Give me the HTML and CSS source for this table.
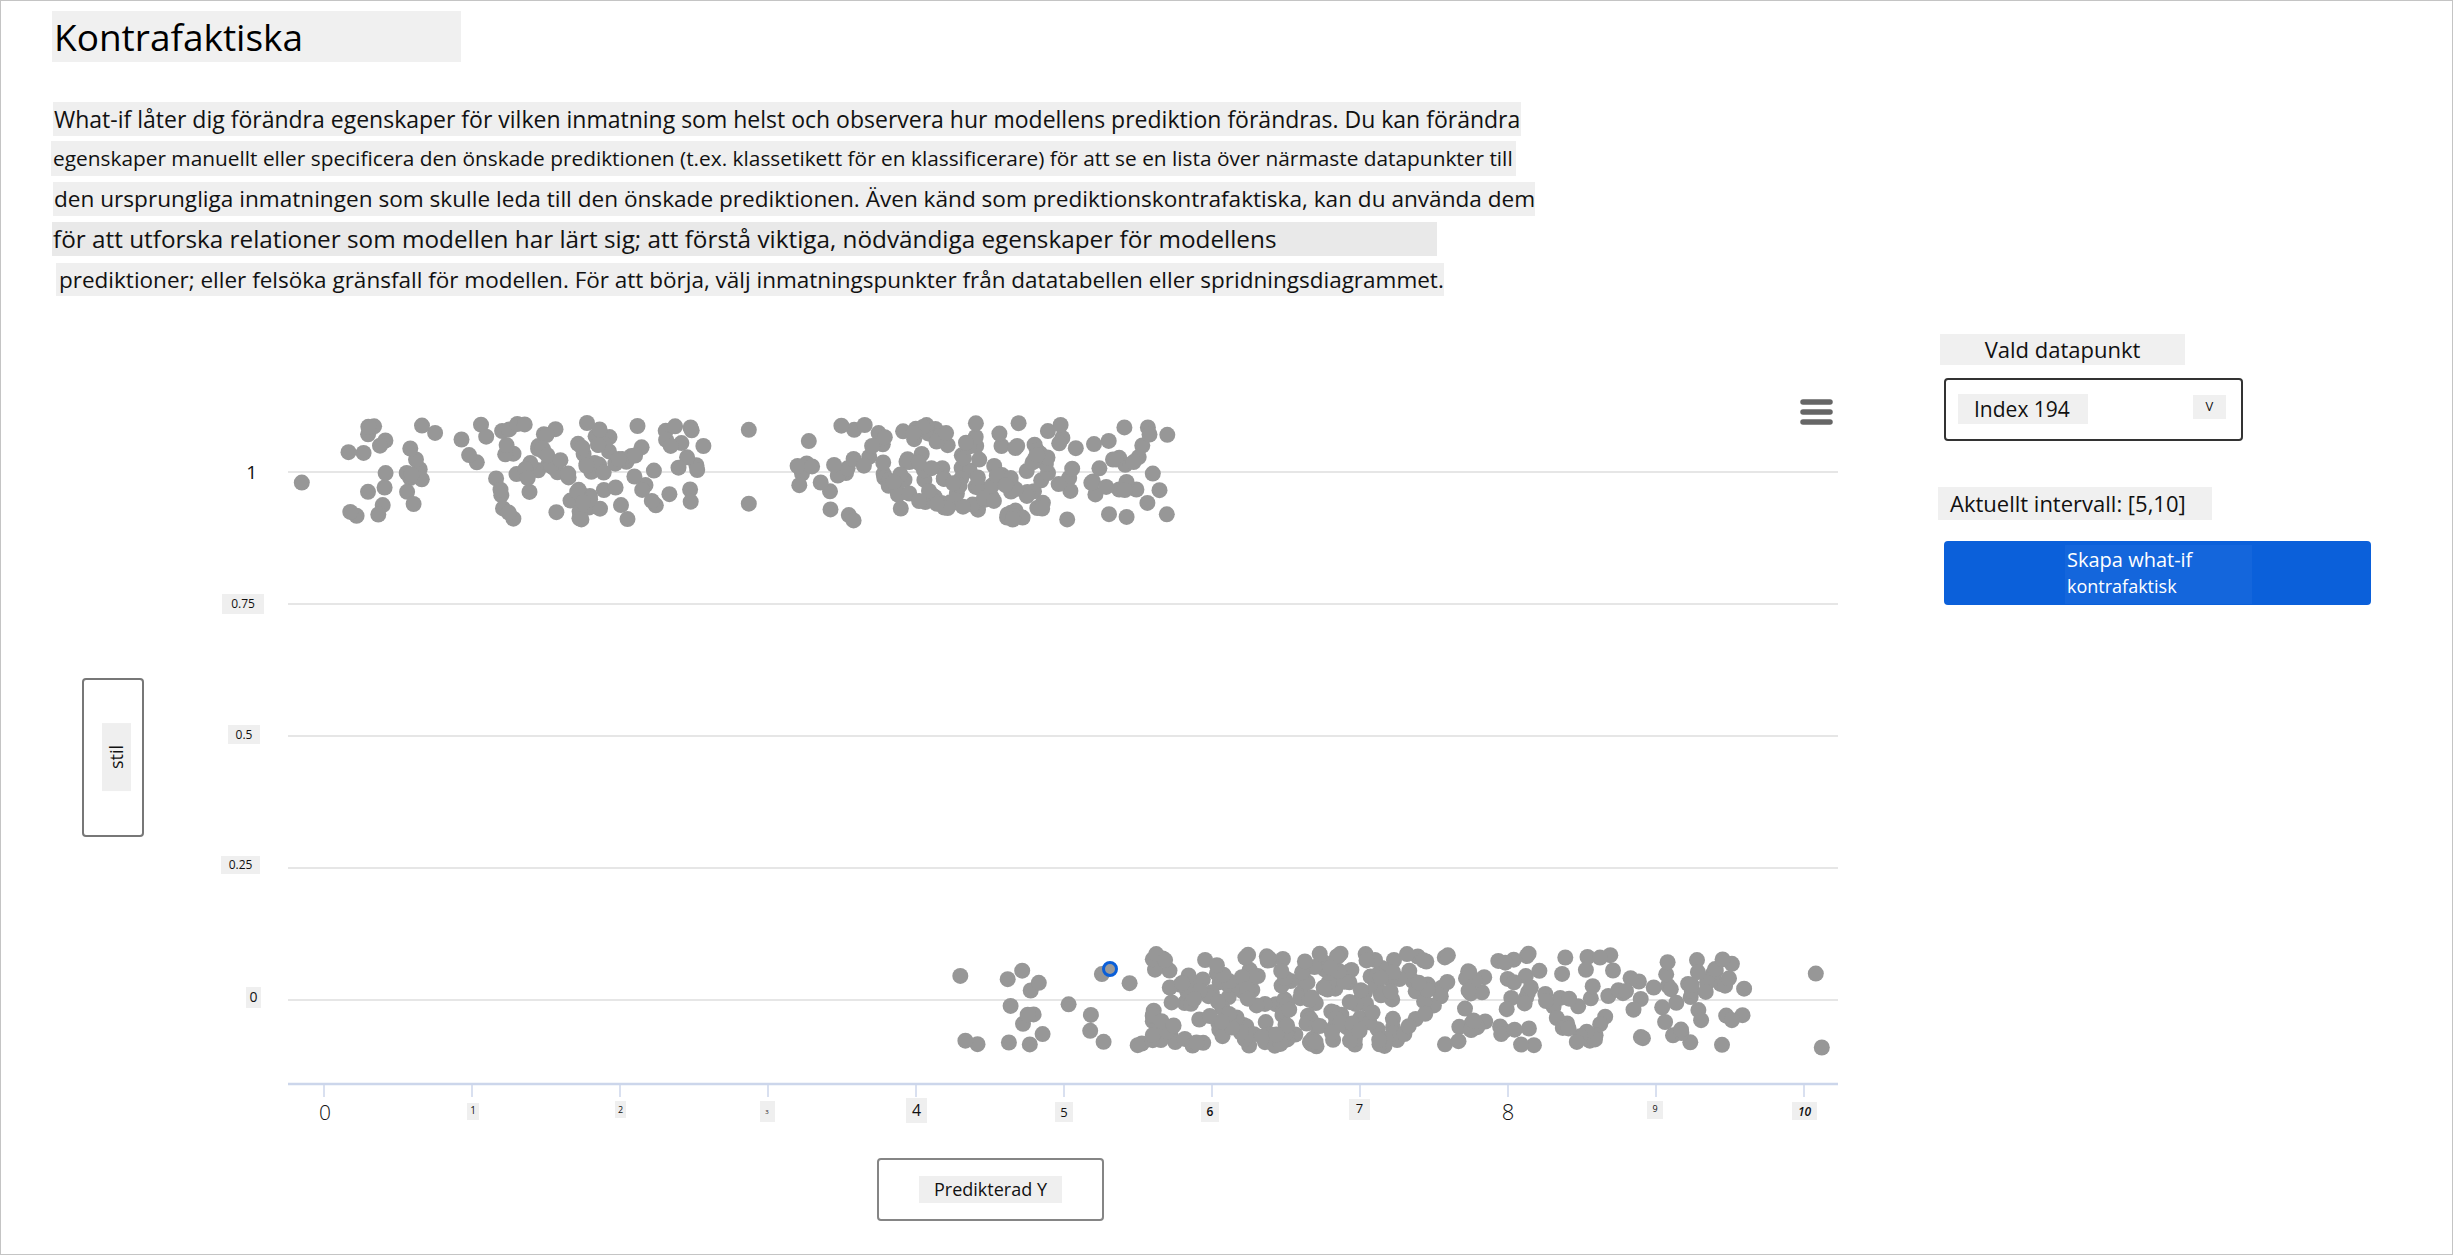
FILE: index.html
```html
<!DOCTYPE html>
<html lang="sv">
<head>
<meta charset="utf-8">
<title>Kontrafaktiska</title>
<link rel="stylesheet" href="styles.css">
</head>
<body>
<div class="page">
  <header class="intro">
    <h1 class="title">Kontrafaktiska</h1>
    <div class="desc">
      <p class="line l1">What-if låter dig förändra egenskaper för vilken inmatning som helst och observera hur modellens prediktion förändras. Du kan förändra</p>
      <p class="line l2">egenskaper manuellt eller specificera den önskade prediktionen (t.ex. klassetikett för en klassificerare) för att se en lista över närmaste datapunkter till</p>
      <p class="line l3">den ursprungliga inmatningen som skulle leda till den önskade prediktionen. Även känd som prediktionskontrafaktiska, kan du använda dem</p>
      <p class="line l4">för att utforska relationer som modellen har lärt sig; att förstå viktiga, nödvändiga egenskaper för modellens</p>
      <p class="line l5">prediktioner; eller felsöka gränsfall för modellen. För att börja, välj inmatningspunkter från datatabellen eller spridningsdiagrammet.</p>
    </div>
  </header>
  <main class="main">
    <section class="chart">
      <div class="y-title"><span>stil</span></div>
      <svg class="plot" width="1740" height="840" viewBox="161 300 1740 840" xmlns="http://www.w3.org/2000/svg">
        <g class="grid">
          <line x1="288" y1="472" x2="1838" y2="472"/>
          <line x1="288" y1="604" x2="1838" y2="604"/>
          <line x1="288" y1="736" x2="1838" y2="736"/>
          <line x1="288" y1="868" x2="1838" y2="868"/>
          <line x1="288" y1="1000" x2="1838" y2="1000"/>
        </g>
        <g class="ylabels">
          <text x="257" y="479" class="t19 end">1</text>
          <rect x="222" y="594" width="42" height="20"/>
          <text x="243" y="608" class="t12 mid">0.75</text>
          <rect x="228" y="725" width="32" height="19"/>
          <text x="244" y="739" class="t12 mid">0.5</text>
          <rect x="221" y="856" width="39" height="18"/>
          <text x="240.5" y="869" class="t12 mid">0.25</text>
          <rect x="246" y="987" width="15" height="21"/>
          <text x="253.5" y="1002" class="t14 mid">0</text>
        </g>
        <g id="dots" class="dots"></g>
        <g class="selected">
          <circle cx="1110" cy="969" r="6.5" />
        </g>
        <g class="axis">
          <line class="axis-line" x1="288" y1="1084" x2="1838" y2="1084"/>
          <line x1="324" y1="1084" x2="324" y2="1097"/>
          <line x1="472" y1="1084" x2="472" y2="1097"/>
          <line x1="620" y1="1084" x2="620" y2="1097"/>
          <line x1="768" y1="1084" x2="768" y2="1097"/>
          <line x1="916" y1="1084" x2="916" y2="1097"/>
          <line x1="1064" y1="1084" x2="1064" y2="1097"/>
          <line x1="1212" y1="1084" x2="1212" y2="1097"/>
          <line x1="1360" y1="1084" x2="1360" y2="1097"/>
          <line x1="1508" y1="1084" x2="1508" y2="1097"/>
          <line x1="1656" y1="1084" x2="1656" y2="1097"/>
          <line x1="1804" y1="1084" x2="1804" y2="1097"/>
        </g>
        <g class="xlabels">
          <text x="325" y="1120" class="t21 mid thin">0</text>
          <rect x="467" y="1103" width="12" height="17"/>
          <text x="473" y="1114" class="t10 mid">1</text>
          <rect x="615" y="1101" width="11" height="17"/>
          <text x="620.5" y="1113" class="t9 mid">2</text>
          <rect x="760" y="1101" width="15" height="21"/>
          <text x="767" y="1114" class="t6 mid">3</text>
          <rect x="906" y="1098" width="21" height="25"/>
          <text x="916.5" y="1116" class="t16 mid">4</text>
          <rect x="1055" y="1102" width="18" height="20"/>
          <text x="1064" y="1117" class="t13 mid">5</text>
          <rect x="1201" y="1102" width="18" height="20"/>
          <text x="1210" y="1116" class="t12 mid bold">6</text>
          <rect x="1349" y="1099" width="21" height="21"/>
          <text x="1359.5" y="1113" class="t13 mid">7</text>
          <text x="1508" y="1120" class="t22 mid thin">8</text>
          <rect x="1647" y="1101" width="16" height="18"/>
          <text x="1655" y="1112" class="t9 mid">9</text>
          <rect x="1792" y="1102" width="25" height="18"/>
          <text x="1804.5" y="1116" class="t12 mid bold ital">10</text>
        </g>
        <g class="menu">
          <line x1="1803" y1="402" x2="1830" y2="402"/>
          <line x1="1803" y1="412" x2="1830" y2="412"/>
          <line x1="1803" y1="422" x2="1830" y2="422"/>
        </g>
      </svg>
      <div class="x-title"><span>Predikterad Y</span></div>
    </section>
    <aside class="panel">
      <div class="panel-label">Vald datapunkt</div>
      <div class="select">
        <span class="select-value">Index 194</span>
        <span class="select-caret">V</span>
      </div>
      <div class="range">Aktuellt intervall: [5,10]</div>
      <button class="cta" type="button"><span class="cta-text"><span class="cta-l1">Skapa what-if</span><span class="cta-l2">kontrafaktisk</span></span></button>
    </aside>
  </main>
</div>
<script src="script.js"></script>
</body>
</html>
```

FILE: styles.css
```css
* { box-sizing: border-box; }
html, body { margin: 0; padding: 0; background: #ffffff; }
body {
  font-family: "Open Sans", "Noto Sans", "Liberation Sans", sans-serif;
  color: #111111;
}
.page {
  width: 2453px;
  height: 1255px;
  border: 1px solid #c4c4c4;
  overflow: hidden;
}
.title {
  margin: 10px 0 0 51px;
  width: 409px;
  height: 51px;
  padding-left: 2px;
  background: #f0f0f0;
  font-size: 37px;
  line-height: 51px;
  font-weight: 400;
  color: #000;
  white-space: nowrap;
}
.desc { margin-top: 40px; }
.line {
  margin: 0;
  height: 34px;
  line-height: 34px;
  background: #efefef;
  white-space: nowrap;
  overflow: hidden;
  color: #111;
}
.l1 { margin-left: 52px; width: 1468px; padding-left: 1px; font-size: 23px; }
.l2 { margin: 5px 0 0 50px; width: 1465px; height: 35px; line-height: 35px; padding-left: 2px; font-size: 20.85px; }
.l3 { margin: 6px 0 0 52px; width: 1482px; padding-left: 1px; font-size: 22.6px; }
.l4 { margin: 6px 0 0 51px; width: 1385px; padding-left: 1px; font-size: 24.3px; background: #e9e9e9; }
.l5 { margin: 7px 0 0 55px; width: 1388px; height: 33px; line-height: 33px; padding-left: 3px; font-size: 22.5px; }

.main {
  display: flex;
  align-items: flex-start;
  margin-top: 4px;
}
.chart {
  display: grid;
  grid-template-columns: 160px 1740px;
  grid-template-rows: 840px auto;
}
.y-title {
  margin: 378px 0 0 81px;
  width: 62px;
  height: 159px;
  border: 2px solid #777;
  border-radius: 4px;
  display: flex;
  align-items: center;
  justify-content: center;
}
.y-title span {
  writing-mode: vertical-rl;
  transform: rotate(180deg);
  background: #efefef;
  padding: 22px 3px;
  margin-left: 6px;
  font-size: 18px;
  line-height: 23px;
  color: #111;
}
.plot { display: block; }
.x-title {
  grid-column: 1 / -1;
  margin: 18px 0 0 876px;
  width: 227px;
  height: 63px;
  border: 2px solid #858585;
  border-radius: 4px;
  display: flex;
  align-items: center;
  justify-content: center;
}
.x-title span {
  background: #efefef;
  padding: 0 15px;
  height: 27px;
  line-height: 27px;
  font-size: 18px;
  color: #111;
}

/* svg parts */
.grid line { stroke: #e6e6e6; stroke-width: 2; }
.axis line { stroke: #ccd6eb; stroke-width: 1.5; }
.axis .axis-line { stroke-width: 2.5; }
.ylabels rect, .xlabels rect { fill: #efefef; }
.plot text { font-family: "Open Sans", "Noto Sans", sans-serif; fill: #111; }
.plot .mid { text-anchor: middle; }
.plot .end { text-anchor: end; }
.plot .thin { font-weight: 300; }
.plot .bold { font-weight: 600; }
.plot .ital { font-style: italic; }
.t6 { font-size: 6px; }
.t9 { font-size: 9px; }
.t10 { font-size: 10px; }
.t12 { font-size: 12px; }
.t13 { font-size: 13px; }
.t14 { font-size: 14px; }
.t16 { font-size: 16px; }
.t19 { font-size: 19px; }
.t21 { font-size: 21px; }
.t22 { font-size: 22px; }
.dots circle { fill: #979797; }
.selected circle { fill: #9a9a9a; stroke: #0b5fd8; stroke-width: 3; }
.menu line { stroke: #666; stroke-width: 5.5; stroke-linecap: round; }

/* side panel */
.panel {
  margin-left: 37px;
  display: flex;
  flex-direction: column;
  align-items: flex-start;
}
.panel-label {
  margin: 34px 0 0 2px;
  width: 245px;
  height: 31px;
  line-height: 31px;
  background: #f0f0f0;
  font-size: 22px;
  text-align: center;
  color: #111;
}
.select {
  margin: 13px 0 0 6px;
  width: 299px;
  height: 63px;
  border: 2px solid #333;
  border-radius: 4px;
  display: flex;
  justify-content: space-between;
  align-items: flex-start;
  padding: 14px 15px 0 12px;
}
.select-value {
  width: 130px;
  height: 30px;
  line-height: 30px;
  padding-left: 16px;
  background: #f0f0f0;
  font-size: 21px;
  color: #111;
}
.select-caret {
  margin-top: 1px;
  width: 33px;
  height: 24px;
  line-height: 22px;
  background: #f0f0f0;
  font-size: 13px;
  text-align: center;
  color: #111;
}
.range {
  margin-top: 46px;
  width: 274px;
  height: 33px;
  line-height: 33px;
  padding-left: 12px;
  background: #f0f0f0;
  font-size: 22px;
  color: #111;
  white-space: nowrap;
}
.cta {
  margin: 21px 0 0 6px;
  width: 427px;
  height: 64px;
  border: none;
  border-radius: 4px;
  background: #0b60da;
  padding: 4px 0 0 121px;
  display: flex;
  align-items: flex-start;
  font-family: inherit;
  cursor: pointer;
}
.cta-text {
  width: 187px;
  height: 59px;
  background: #1466dc;
  color: #fff;
  text-align: left;
  padding: 1px 0 0 2px;
  display: flex;
  flex-direction: column;
}
.cta-l1 { font-size: 20px; line-height: 27px; }
.cta-l2 { font-size: 18px; line-height: 27px; }
```

FILE: script.js
```js
(function () {
  var NS = 'http://www.w3.org/2000/svg';
  var g = document.getElementById('dots');
  var seed = 194;
  function rnd() {
    seed |= 0; seed = (seed + 0x6D2B79F5) | 0;
    var t = Math.imul(seed ^ (seed >>> 15), 1 | seed);
    t = (t + Math.imul(t ^ (t >>> 7), 61 | t)) ^ t;
    return ((t ^ (t >>> 14)) >>> 0) / 4294967296;
  }
  function norm(m, s) {
    var u = rnd() || 1e-9, v = rnd();
    return m + s * Math.sqrt(-2 * Math.log(u)) * Math.cos(2 * Math.PI * v);
  }
  function clip(x, a, b) { return Math.max(a, Math.min(b, x)); }
  var X0 = 324, DX = 148, Y0 = 1000, DY = 528;
  var pts = [];
  function add(xv, yv) { pts.push([X0 + DX * xv, Y0 - DY * yv]); }
  function jit(c, a) { return c + (rnd() * 2 - 1) * a; }
  var i, x;
  // class 1
  add(-0.15, 0.98);
  for (i = 0; i < 130; i++) {
    x = rnd() < 0.5 ? 0.15 + rnd() * 2.45 : clip(norm(1.65, 0.38), 0.15, 2.6);
    add(x, jit(1, 0.093));
  }
  add(2.87, 1.08); add(2.87, 0.94);
  for (i = 0; i < 175; i++) {
    x = rnd() < 0.4 ? 3.2 + rnd() * 2.55 : clip(norm(4.45, 0.5), 3.2, 5.75);
    add(x, jit(1, 0.093));
  }
  // class 0
  for (i = 0; i < 22; i++) add(4.1 + rnd() * 1.5, jit(0, 0.088));
  for (i = 0; i < 340; i++) {
    x = rnd() < 0.6 ? 5.6 + rnd() * 4.0 : clip(norm(6.6, 0.55), 5.6, 9.6);
    add(x, jit(0, 0.088));
  }
  add(10.08, 0.05); add(10.12, -0.09);
  for (i = 0; i < pts.length; i++) {
    var c = document.createElementNS(NS, 'circle');
    c.setAttribute('cx', pts[i][0].toFixed(1));
    c.setAttribute('cy', pts[i][1].toFixed(1));
    c.setAttribute('r', '8');
    g.appendChild(c);
  }
})();
```
